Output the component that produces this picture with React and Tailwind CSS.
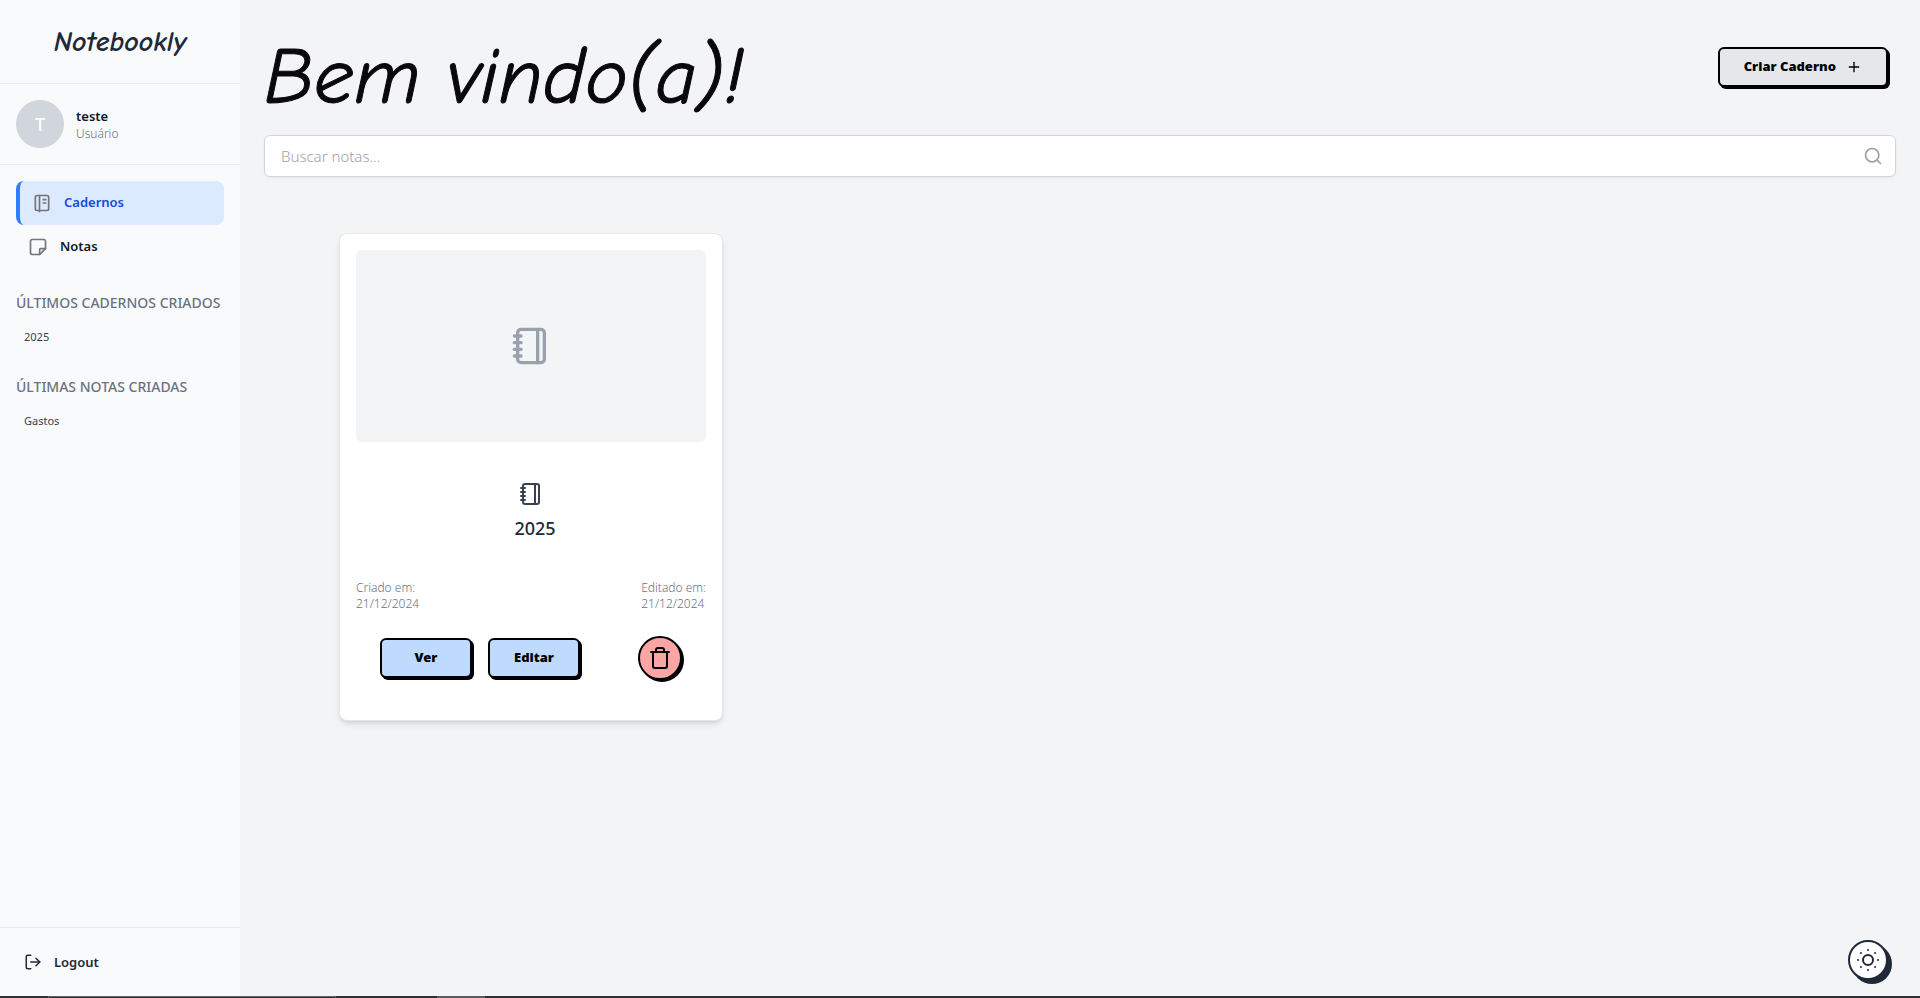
import { LogOut, Notebook, Plus, Search, SunDim, Trash } from "lucide-react";

const latest = [
  { title: "ÚLTIMOS CADERNOS CRIADOS", items: ["2025"] },
  { title: "ÚLTIMAS NOTAS CRIADAS", items: ["Gastos"] },
];

const iconProps = {
  viewBox: "0 0 24 24",
  fill: "none",
  stroke: "currentColor",
  strokeWidth: 2,
  strokeLinecap: "round",
  strokeLinejoin: "round",
  "aria-hidden": true,
};

function BookIcon() {
  return (
    <svg {...iconProps} className="size-5 text-[#757575]">
      <rect x="4" y="3" width="16" height="18" rx="2" />
      <path d="M9 3v19.500M13.500 8h3M13.500 12h3" />
    </svg>
  );
}

function NoteIcon() {
  return (
    <svg {...iconProps} className="size-5 text-[#757575]">
      <path d="M14 21H5a2 2 0 0 1-2-2V5a2 2 0 0 1 2-2h14a2 2 0 0 1 2 2v9z" />
      <path d="M14 21v-6a1 1 0 0 1 1-1h6" />
    </svg>
  );
}

function Sidebar() {
  return (
    <aside className="flex w-60 shrink-0 flex-col bg-[#f9fafc]">
      <div className="flex h-21 items-center justify-center border-b border-gray-200">
        <span className="font-['Comic_Neue','Lato',cursive] text-[28px] font-bold italic text-gray-800">Notebookly</span>
      </div>
      <div className="flex items-center gap-3 border-b border-gray-200 p-4">
        <div className="flex size-12 items-center justify-center rounded-full bg-gray-300 text-lg font-medium text-white">T</div>
        <div>
          <p className="text-[13px]/5 font-semibold text-gray-900">teste</p>
          <p className="text-xs/4 font-light text-gray-500">Usuário</p>
        </div>
      </div>
      <div className="flex flex-1 flex-col gap-6 p-4">
        <nav>
          <a href="#cadernos" className="flex h-11 items-center gap-3 rounded-lg border-l-4 border-blue-500 bg-blue-100 px-3 text-[13px] font-semibold text-blue-700">
            <BookIcon />
            Cadernos
          </a>
          <a href="#notas" className="flex h-11 items-center gap-3 rounded-lg px-3 text-[13px] font-semibold text-gray-900">
            <NoteIcon />
            Notas
          </a>
        </nav>
        {latest.map((group) => (
          <section key={group.title}>
            <h2 className="mb-2 whitespace-nowrap text-sm/5 font-medium text-gray-500">{group.title}</h2>
            <ul>
              {group.items.map((item) => (
                <li key={item} className="p-2 text-[11px]/4 text-gray-700">{item}</li>
              ))}
            </ul>
          </section>
        ))}
      </div>
      <div className="border-t border-gray-200 p-4">
        <button type="button" className="flex w-full items-center gap-3 p-2 text-[13px]/5 font-semibold text-gray-800">
          <LogOut size={18} />
          Logout
        </button>
      </div>
    </aside>
  );
}

function NotebookCard() {
  return (
    <article className="w-96 rounded-lg border border-gray-200 bg-white px-4 pt-4 pb-10 shadow-md">
      <div className="flex h-48 items-center justify-center rounded-md bg-gray-100 text-gray-400">
        <Notebook size={40} />
      </div>
      <div className="mt-10 flex flex-col items-center gap-2">
        <Notebook size={24} className="text-gray-700" />
        <h3 className="pl-2 text-lg/7 font-medium text-gray-800">2025</h3>
      </div>
      <div className="mt-[38px] flex justify-between text-xs/4 font-light text-gray-500">
        <p>Criado em:<br />21/12/2024</p>
        <p>Editado em:<br />21/12/2024</p>
      </div>
      <div className="mt-6 flex items-center justify-between px-6">
        <div className="flex gap-4">
          <button type="button" className="h-10 w-23 rounded-md border-2 border-black bg-blue-200 text-[13px] font-black text-black shadow-[2px_2px_0_#000]">Ver</button>
          <button type="button" className="h-10 w-23 rounded-md border-2 border-black bg-blue-200 text-[13px] font-black text-black shadow-[2px_2px_0_#000]">Editar</button>
        </div>
        <button type="button" aria-label="Excluir caderno" className="flex size-11 items-center justify-center rounded-full border-2 border-black bg-[#fca5a5] text-black shadow-[2px_2px_0_#000]">
          <Trash size={24} />
        </button>
      </div>
    </article>
  );
}

export default function App() {
  return (
    <div className="flex min-h-screen flex-col font-['Noto_Sans','Open_Sans',sans-serif]">
      <div className="flex flex-1">
        <Sidebar />
        <main className="flex flex-1 flex-col bg-gray-100 px-6">
          <header className="flex h-[135px] items-center justify-between pr-2 pb-0.5">
            <h1 className="pt-5 font-['Comic_Neue','Lato',cursive] text-[80px] italic leading-none text-[#09090b] [-webkit-text-stroke:1px]">Bem vindo(a)!</h1>
            <button type="button" className="flex h-10 items-center gap-2.5 rounded-md border-2 border-black bg-gray-200 px-6 text-[13px] font-black text-black shadow-[2px_2px_0_#000]">
              Criar Caderno
              <Plus size={16} />
            </button>
          </header>
          <div className="flex h-[42px] items-center rounded-md border border-gray-300 bg-white px-4 shadow-xs">
            <input type="search" aria-label="Buscar notas" placeholder="Buscar notas..." className="h-full w-full bg-transparent text-[15px] font-light text-gray-900 outline-none placeholder:text-gray-400" />
            <Search size={20} className="-mr-1 shrink-0 text-gray-400" />
          </div>
          <section className="px-[75px] pt-14">
            <NotebookCard />
          </section>
          <button type="button" aria-label="Alternar tema" className="mt-auto mr-2 mb-4 flex size-10 items-center justify-center self-end rounded-full border-2 border-gray-800 bg-white text-gray-800 shadow-[4px_4px_0_#1f2937]">
            <SunDim size={30} strokeWidth={1.6} className="shrink-0" />
          </button>
        </main>
      </div>
      <div className="flex h-[2px] bg-[#303030]">
        <div className="ml-12 w-72 border border-b-0 border-[#626262]" />
        <div className="ml-[101px] w-12 bg-[#5c5c5c]" />
      </div>
    </div>
  );
}
